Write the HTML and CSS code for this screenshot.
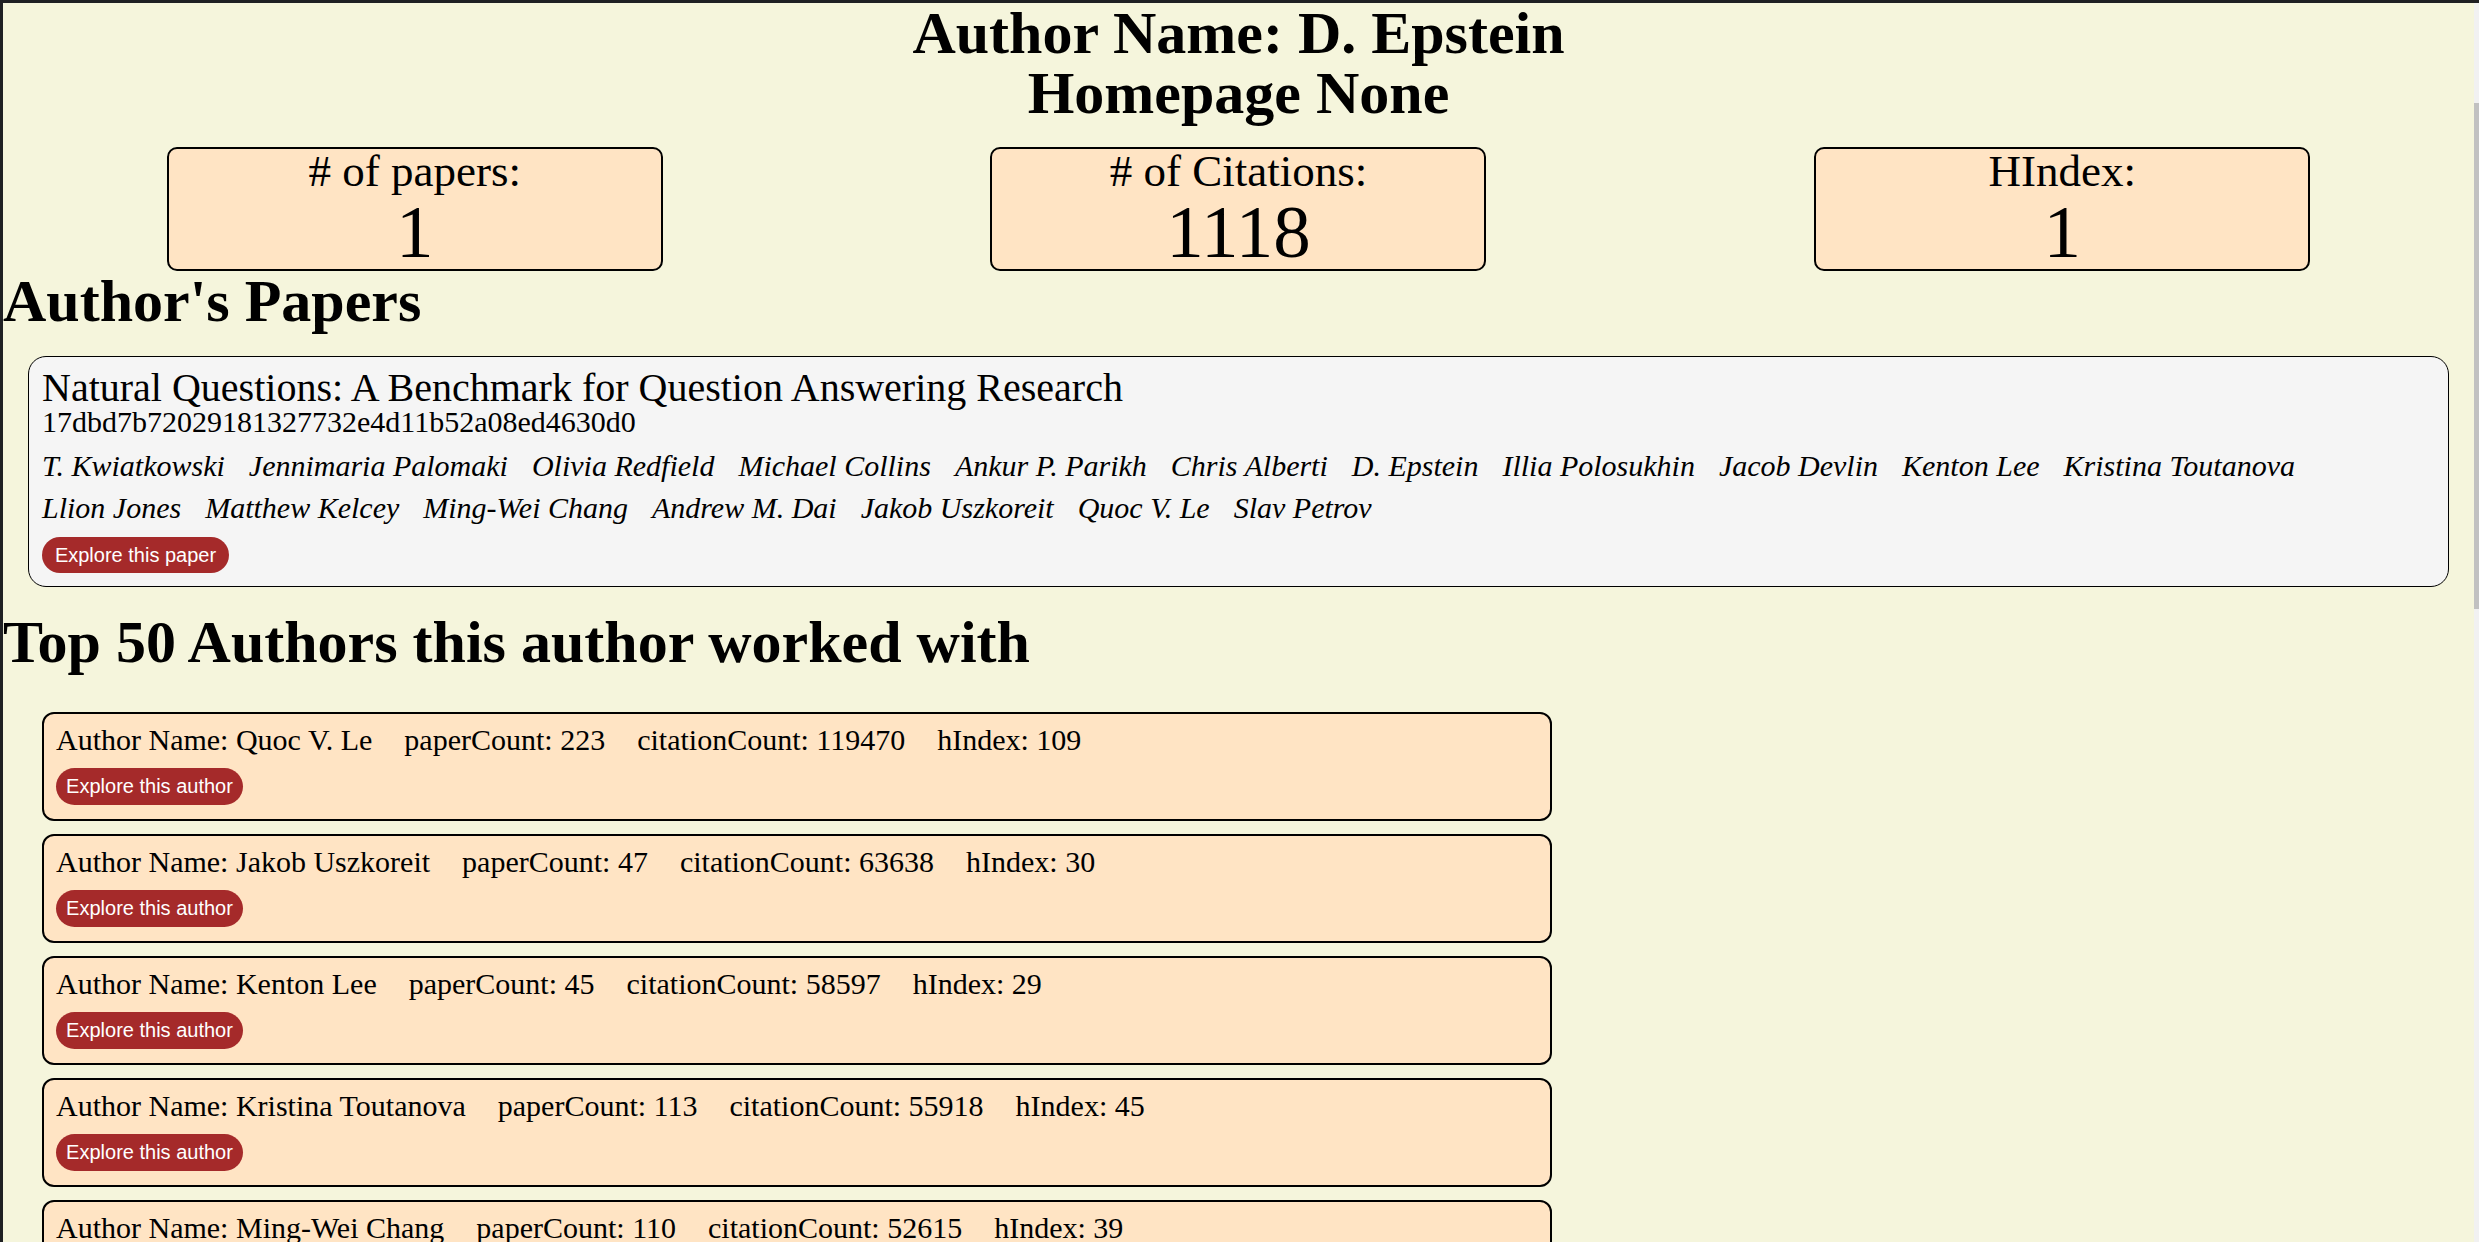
FILE: index.html
```html
<!DOCTYPE html>
<html lang="en">
<head>
<meta charset="utf-8">
<title>Author: D. Epstein</title>
<link rel="stylesheet" href="styles.css">
</head>
<body>
<div class="frame">
  <main class="page">
    <h1 class="header">Author Name: D. Epstein<br>Homepage None</h1>

    <section class="stats">
      <div class="stat">
        <div class="stat-label"># of papers:</div>
        <div class="stat-value">1</div>
      </div>
      <div class="stat">
        <div class="stat-label"># of Citations:</div>
        <div class="stat-value">1118</div>
      </div>
      <div class="stat">
        <div class="stat-label">HIndex:</div>
        <div class="stat-value">1</div>
      </div>
    </section>

    <h1 class="section-title">Author's Papers</h1>

    <article class="paper">
      <div class="paper-title">Natural Questions: A Benchmark for Question Answering Research</div>
      <div class="paper-id">17dbd7b72029181327732e4d11b52a08ed4630d0</div>
      <div class="paper-authors">
        <span>T. Kwiatkowski</span>
        <span>Jennimaria Palomaki</span>
        <span>Olivia Redfield</span>
        <span>Michael Collins</span>
        <span>Ankur P. Parikh</span>
        <span>Chris Alberti</span>
        <span>D. Epstein</span>
        <span>Illia Polosukhin</span>
        <span>Jacob Devlin</span>
        <span>Kenton Lee</span>
        <span>Kristina Toutanova</span>
        <span>Llion Jones</span>
        <span>Matthew Kelcey</span>
        <span>Ming-Wei Chang</span>
        <span>Andrew M. Dai</span>
        <span>Jakob Uszkoreit</span>
        <span>Quoc V. Le</span>
        <span>Slav Petrov</span>
      </div>
      <button class="btn btn-paper">Explore this paper</button>
    </article>

    <h1 class="section-title">Top 50 Authors this author worked with</h1>

    <section class="authors">
      <div class="author">
        <div class="author-line">
          <span>Author Name: Quoc V. Le</span>
          <span>paperCount: 223</span>
          <span>citationCount: 119470</span>
          <span>hIndex: 109</span>
        </div>
        <button class="btn btn-author">Explore this author</button>
      </div>
      <div class="author">
        <div class="author-line">
          <span>Author Name: Jakob Uszkoreit</span>
          <span>paperCount: 47</span>
          <span>citationCount: 63638</span>
          <span>hIndex: 30</span>
        </div>
        <button class="btn btn-author">Explore this author</button>
      </div>
      <div class="author">
        <div class="author-line">
          <span>Author Name: Kenton Lee</span>
          <span>paperCount: 45</span>
          <span>citationCount: 58597</span>
          <span>hIndex: 29</span>
        </div>
        <button class="btn btn-author">Explore this author</button>
      </div>
      <div class="author">
        <div class="author-line">
          <span>Author Name: Kristina Toutanova</span>
          <span>paperCount: 113</span>
          <span>citationCount: 55918</span>
          <span>hIndex: 45</span>
        </div>
        <button class="btn btn-author">Explore this author</button>
      </div>
      <div class="author">
        <div class="author-line">
          <span>Author Name: Ming-Wei Chang</span>
          <span>paperCount: 110</span>
          <span>citationCount: 52615</span>
          <span>hIndex: 39</span>
        </div>
        <button class="btn btn-author">Explore this author</button>
      </div>
    </section>
  </main>
  <div class="scrollbar"><div class="thumb"></div></div>
</div>
</body>
</html>
```

FILE: styles.css
```css
html, body {
  margin: 0;
  padding: 0;
  height: 100%;
  overflow: hidden;
  background: #1f2023;
}

.frame {
  display: flex;
  height: 100%;
  padding-top: 3px;
  padding-left: 3px;
  box-sizing: border-box;
}

.page {
  flex: 1;
  min-width: 0;
  background: #f5f5dc;
  color: #000;
  font-family: "Liberation Serif", "Times New Roman", serif;
}

.scrollbar {
  width: 5px;
  background: #f1f1f1;
}

.thumb {
  margin-top: 100px;
  height: 506px;
  background: #c1c1c1;
}

.header {
  margin: 0;
  text-align: center;
  font-size: 60px;
  line-height: 60px;
  font-weight: bold;
}

.stats {
  display: grid;
  grid-template-columns: repeat(3, 1fr);
  justify-items: center;
  margin-top: 24px;
}

.stat {
  width: 496px;
  box-sizing: border-box;
  border: 2px solid #000;
  border-radius: 10px;
  background: #ffe4c4;
  text-align: center;
}

.stat-label {
  font-size: 45px;
  line-height: 45px;
}

.stat-value {
  font-size: 75px;
  line-height: 75px;
}

.section-title {
  margin: 0;
  font-size: 60px;
  line-height: 60px;
  font-weight: bold;
}

.paper {
  margin: 25px;
  padding: 15px 13px 13px;
  border: 1px solid #000;
  border-radius: 18px;
  background: #f5f5f5;
}

.paper-title {
  font-size: 40px;
  line-height: 32px;
}

.paper-id {
  margin-top: 8px;
  font-size: 30px;
  line-height: 20px;
}

.paper-authors {
  display: flex;
  flex-wrap: wrap;
  column-gap: 24px;
  row-gap: 8px;
  margin-top: 17px;
  font-size: 30px;
  line-height: 34px;
  font-style: italic;
}

.btn {
  display: block;
  width: 187px;
  padding: 0;
  border: none;
  background: #a52a2a;
  color: #fff;
  font-family: "Liberation Sans", Arial, sans-serif;
  font-size: 20px;
  text-align: center;
}

.btn-paper {
  height: 36px;
  margin-top: 12px;
  border-radius: 18px;
}

.btn-author {
  height: 37px;
  margin-top: 11px;
  border-radius: 18.5px;
}

.authors {
  display: flex;
  flex-direction: column;
  gap: 13px;
  padding: 40px 0 0 39px;
}

.author {
  width: 1510px;
  box-sizing: border-box;
  padding: 9px 12px 14px;
  border: 2px solid #000;
  border-radius: 12px;
  background: #ffe4c4;
}

.author-line {
  display: flex;
  gap: 32px;
  font-size: 30px;
  line-height: 34px;
}
```
